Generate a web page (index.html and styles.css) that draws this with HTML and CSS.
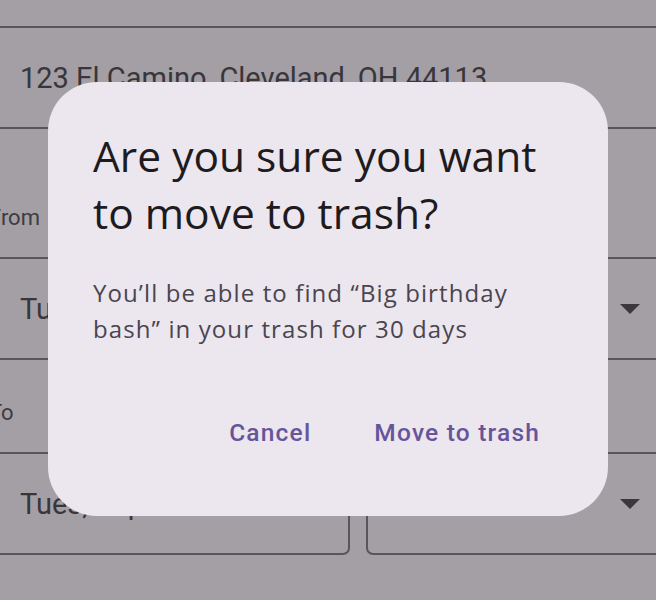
FILE: index.html
```html
<!DOCTYPE html>
<html lang="en">
<head>
<meta charset="utf-8">
<title>Move to trash</title>
<link rel="stylesheet" href="styles.css">
</head>
<body>
  <main class="form">
    <div class="field field-full">
      <span class="value">123 El Camino, Cleveland, OH 44113</span>
    </div>
    <div class="label label-from">From</div>
    <div class="row">
      <div class="field"><span class="value">Tues, Sep 12</span></div>
      <div class="field field-select">
        <span class="value">7:00 PM</span>
        <svg class="caret" width="20" height="10" viewBox="0 0 20 10"><path d="M0 0H20L10 10Z"/></svg>
      </div>
    </div>
    <div class="label label-to">To</div>
    <div class="row">
      <div class="field"><span class="value">Tues, Sep 12</span></div>
      <div class="field field-select">
        <span class="value">10:00 PM</span>
        <svg class="caret" width="20" height="10" viewBox="0 0 20 10"><path d="M0 0H20L10 10Z"/></svg>
      </div>
    </div>
  </main>

  <div class="scrim">
    <section class="dialog" role="alertdialog" aria-labelledby="dlg-title">
      <h1 class="dialog-title" id="dlg-title">Are you sure you want to move to trash?</h1>
      <p class="dialog-body">You’ll be able to find “Big birthday bash” in your trash for 30 days</p>
      <div class="dialog-actions">
        <button class="text-btn">Cancel</button>
        <button class="text-btn">Move to trash</button>
      </div>
    </section>
  </div>
</body>
</html>
```
FILE: styles.css
```css
* { box-sizing: border-box; }

html, body {
  margin: 0;
  padding: 0;
  width: 656px;
  height: 600px;
  overflow: hidden;
}

body {
  background: #a39fa4;
  font-family: Roboto, "Liberation Sans", sans-serif;
  color: #38363b;
}

.form {
  width: 678px;
  margin-left: -8px;
  padding-top: 26px;
  display: flex;
  flex-direction: column;
}

.field {
  height: 103px;
  border: 2px solid #58565b;
  border-radius: 7px;
  padding: 0 28px 0 26px;
  display: flex;
  align-items: center;
  justify-content: space-between;
  font-size: 29px;
  color: #38363b;
  white-space: nowrap;
}

.field-full {
  margin-left: -20px;
  margin-right: -20px;
  padding-left: 46px;
}

.row {
  display: grid;
  grid-template-columns: 358px 1fr;
  gap: 16px;
}

.caret { fill: #3a383c; flex: none; }

.label {
  font-size: 22px;
  line-height: 30px;
  color: #3e3c40;
  margin-left: -3px;
  margin-bottom: 24px;
}
.label-from { margin-top: 74px; }
.label-to { margin-top: 38px; }

.scrim {
  position: fixed;
  inset: 0;
  display: flex;
  justify-content: center;
  align-items: flex-start;
  padding-top: 82px;
}

.dialog {
  width: 560px;
  height: 434px;
  background: #ece6ee;
  border-radius: 49px;
  padding: 45px 47px 0 45px;
  display: flex;
  flex-direction: column;
}

.dialog-title {
  margin: 0;
  font-family: "Open Sans", sans-serif;
  font-weight: 400;
  font-size: 42.5px;
  line-height: 57px;
  color: #1d1b20;
}

.dialog-body {
  margin: 34px 0 0;
  font-family: "Open Sans", sans-serif;
  font-size: 24px;
  line-height: 36px;
  letter-spacing: 1.1px;
  color: #49454f;
}

.dialog-actions {
  margin-top: 50px;
  display: flex;
  justify-content: flex-end;
  gap: 21px;
}

.text-btn {
  height: 70px;
  padding: 0 21px;
  border: 0;
  background: transparent;
  font-family: Roboto, sans-serif;
  font-weight: 500;
  font-size: 24.5px;
  letter-spacing: 1.2px;
  color: #66559a;
  cursor: pointer;
}
```
